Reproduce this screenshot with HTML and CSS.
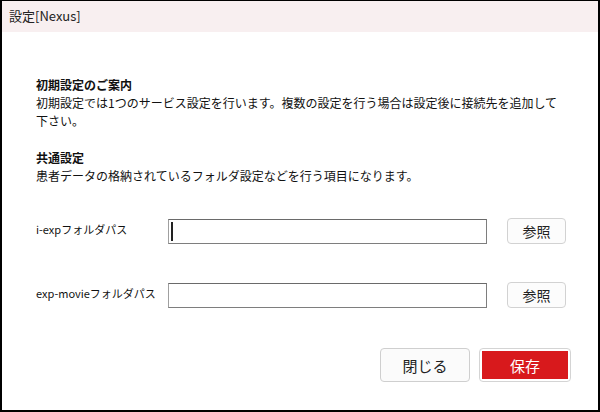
FILE: index.html
```html
<!DOCTYPE html>
<html lang="ja">
<head>
<meta charset="utf-8">
<title>設定[Nexus]</title>
<link rel="stylesheet" href="styles.css">
</head>
<body>
<div class="window">
  <div class="titlebar">設定[Nexus]</div>
  <div class="content">
    <section class="info">
      <h2 class="info-title">初期設定のご案内</h2>
      <p class="info-text">初期設定では1つのサービス設定を行います。複数の設定を行う場合は設定後に接続先を追加して<br>下さい。</p>
    </section>
    <section class="info">
      <h2 class="info-title">共通設定</h2>
      <p class="info-text">患者データの格納されているフォルダ設定などを行う項目になります。</p>
    </section>
    <div class="form">
      <div class="form-row">
        <label class="form-label">i-expフォルダパス</label>
        <div class="field-wrap">
          <input class="field" type="text" value="">
          <span class="caret"></span>
        </div>
        <button class="btn-browse" type="button">参照</button>
      </div>
      <div class="form-row">
        <label class="form-label">exp-movieフォルダパス</label>
        <div class="field-wrap">
          <input class="field" type="text" value="">
        </div>
        <button class="btn-browse" type="button">参照</button>
      </div>
    </div>
    <div class="actions">
      <button class="btn btn-close" type="button">閉じる</button>
      <button class="btn btn-save" type="button"><span class="btn-save-inner">保存</span></button>
    </div>
  </div>
</div>
</body>
</html>
```
FILE: styles.css
```css
* { box-sizing: border-box; }
html, body {
  margin: 0;
  padding: 0;
  background: #ffffff;
}
body {
  width: 600px;
  height: 412px;
  font-family: "Noto Sans CJK JP", "Noto Sans", sans-serif;
  color: #111;
}
.window {
  width: 600px;
  height: 412px;
  border-left: 2px solid #000;
  border-right: 2px solid #000;
  border-top: 1px solid #000;
  border-bottom: 2px solid #000;
  background: #fff;
  display: flex;
  flex-direction: column;
}
.titlebar {
  height: 31px;
  background: #f8eff0;
  display: flex;
  align-items: center;
  padding-left: 7px;
  padding-bottom: 2px;
  font-size: 13px;
  color: #222;
}
.content {
  padding: 43px 27px 0 34px;
  display: flex;
  flex-direction: column;
}
.info + .info { margin-top: 18px; }
.info-title {
  margin: 0;
  font-size: 12px;
  font-weight: 700;
  line-height: 19px;
}
.info-text {
  margin: 0;
  font-size: 12px;
  line-height: 18px;
  white-space: nowrap;
}
.form {
  margin-top: 32px;
  display: flex;
  flex-direction: column;
  gap: 38px;
}
.form-row {
  display: grid;
  grid-template-columns: 132px 319px 79px;
  align-items: center;
  height: 26px;
}
.form-label {
  font-size: 11px;
  line-height: 16px;
  padding-bottom: 5px;
  white-space: nowrap;
  color: #111;
}
.field-wrap {
  position: relative;
  height: 26px;
  margin-top: 2px;
}
.field {
  width: 100%;
  height: 25px;
  margin: 0;
  border: 1px solid #7e7e7e;
  border-top-color: #6a6a6a;
  border-left-color: #a0a0a0;
  background: #fff;
  padding: 0 4px;
  font: inherit;
  outline: none;
}
.caret {
  position: absolute;
  left: 3px;
  top: 3px;
  width: 2px;
  height: 19px;
  background: #222;
}
.btn-browse {
  justify-self: end;
  width: 59px;
  height: 26px;
  margin: 0;
  padding: 0;
  border: 1px solid #d2d2d2;
  border-radius: 4px;
  background: #fcfcfc;
  font-family: inherit;
  font-size: 14px;
  color: #222;
}
.actions {
  margin-top: 41px;
  display: flex;
  justify-content: flex-end;
  gap: 9px;
}
.btn {
  width: 90px;
  height: 34px;
  margin: 0;
  padding: 0;
  border-radius: 4px;
  font-family: inherit;
  font-size: 15px;
}
.btn-close {
  border: 1px solid #cfcfcf;
  background: #fbfbfb;
  color: #222;
}
.btn-save {
  width: 92px;
  border: 1px solid #d4d4d4;
  background: #fff;
  padding: 2px;
  display: flex;
}
.btn-save-inner {
  flex: 1;
  background: #d8191c;
  color: #fff;
  display: flex;
  align-items: center;
  justify-content: center;
}
```
